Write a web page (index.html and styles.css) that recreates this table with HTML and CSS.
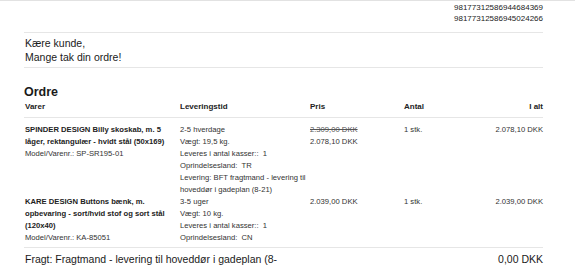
FILE: index.html
```html
<!DOCTYPE html>
<html lang="da">
<head>
<meta charset="utf-8">
<title>Ordre</title>
<link rel="stylesheet" href="styles.css">
</head>
<body>
<div class="topline"></div>
<div class="wrap">
  <div class="ids">
    <div>98177312586944684369</div>
    <div>98177312586945024266</div>
  </div>
  <div class="greet">
    <div>Kære kunde,</div>
    <div>Mange tak din ordre!</div>
  </div>
  <h2 class="title">Ordre</h2>
  <table class="order">
    <colgroup>
      <col class="c1"><col class="c2"><col class="c3"><col class="c4"><col class="c5">
    </colgroup>
    <thead>
      <tr>
        <th class="first">Varer</th>
        <th>Leveringstid</th>
        <th>Pris</th>
        <th>Antal</th>
        <th class="right">I alt</th>
      </tr>
    </thead>
    <tbody>
      <tr class="row-first">
        <td class="first">
          <div class="name">SPINDER DESIGN Billy skoskab, m. 5 låger, rektangulær - hvidt stål (50x169)</div>
          <div>Model/Varenr.: SP-SR195-01</div>
        </td>
        <td class="lev">
          <div>2-5 hverdage</div>
          <div>Vægt: 19,5 kg.</div>
          <div>Leveres i antal kasser:: &nbsp;1</div>
          <div>Oprindelsesland: &nbsp;TR</div>
          <div>Levering: BFT fragtmand - levering til hoveddør i gadeplan (8-21)</div>
        </td>
        <td>
          <div class="old">2.309,00 DKK</div>
          <div>2.078,10 DKK</div>
        </td>
        <td>1 stk.</td>
        <td class="right">2.078,10 DKK</td>
      </tr>
      <tr class="row-last">
        <td class="first">
          <div class="name">KARE DESIGN Buttons bænk, m. opbevaring - sort/hvid stof og sort stål (120x40)</div>
          <div>Model/Varenr.: KA-85051</div>
        </td>
        <td class="lev">
          <div>3-5 uger</div>
          <div>Vægt: 10 kg.</div>
          <div>Leveres i antal kasser:: &nbsp;1</div>
          <div>Oprindelsesland: &nbsp;CN</div>
        </td>
        <td>2.039,00 DKK</td>
        <td>1 stk.</td>
        <td class="right">2.039,00 DKK</td>
      </tr>
    </tbody>
    <tfoot>
      <tr>
        <td colspan="2" class="first fragt">Fragt: Fragtmand - levering til hoveddør i gadeplan (8-21)</td>
        <td colspan="3" class="right fragt-sum">0,00 DKK</td>
      </tr>
    </tfoot>
  </table>
</div>
</body>
</html>
```

FILE: styles.css
```css
html, body {
  margin: 0;
  padding: 0;
  background: #ffffff;
}

body {
  font-family: "Liberation Sans", Arial, sans-serif;
  color: #222222;
  overflow: hidden;
}

.topline {
  height: 1px;
  background: #e2e2e2;
}

.wrap {
  margin: 0 32px 0 24px;
}

.ids {
  padding-top: 1px;
  font-size: 8px;
  line-height: 11px;
  text-align: right;
  color: #222222;
  margin-bottom: 8px;
}

.greet {
  border-top: 1px solid #e6e6e6;
  border-bottom: 1px solid #e6e6e6;
  padding: 3px 0 3px 1px;
  font-size: 10.5px;
  line-height: 14px;
  color: #1a1a1a;
}

.title {
  margin: 17px 0 0 0;
  font-size: 12.5px;
  line-height: 14px;
  font-weight: bold;
  color: #1a1a1a;
}

.order {
  width: 519px;
  border-collapse: collapse;
  table-layout: fixed;
  font-size: 7.65px;
  line-height: 12px;
  color: #333333;
}

.c1 { width: 156px; }
.c2 { width: 130px; }
.c3 { width: 94px; }
.c4 { width: 70px; }
.c5 { width: 69px; }

.order th {
  text-align: left;
  font-weight: bold;
  font-size: 8px;
  color: #222222;
  padding: 2px 0 4px 0;
  border-bottom: 1px solid #e6e6e6;
}

.order td {
  vertical-align: top;
  padding: 0;
}

.order .first {
  padding-left: 1px;
  padding-right: 10px;
}

.order td.lev {
  padding-right: 2px;
}

.order .right {
  text-align: right;
}

.row-first td {
  padding-top: 6px;
}

.row-last td {
  padding-bottom: 3px;
}

.name {
  font-weight: bold;
  color: #222222;
}

.old {
  text-decoration: line-through;
  color: #555555;
}

.order tfoot td {
  border-top: 1px solid #e6e6e6;
  padding-top: 4px;
  font-size: 10.5px;
  line-height: 14px;
  color: #1a1a1a;
}

.order td.fragt {
  padding-right: 25px;
}
```
